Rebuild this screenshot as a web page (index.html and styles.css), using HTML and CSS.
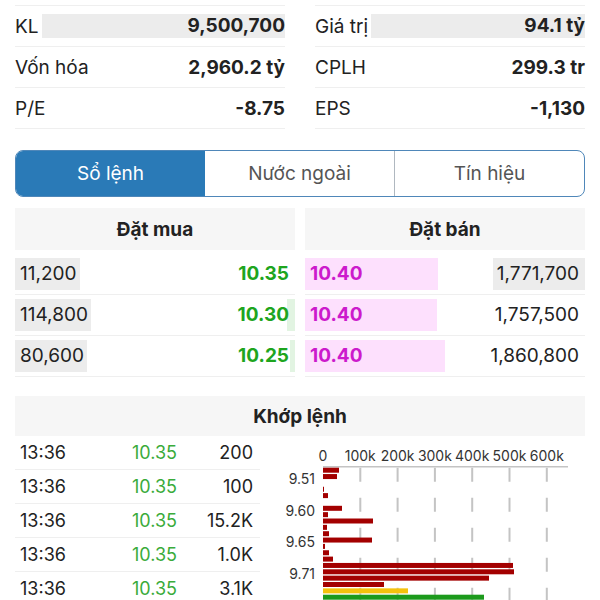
FILE: index.html
```html
<!DOCTYPE html>
<html lang="vi">
<head>
    <meta charset="UTF-8">
    <meta name="viewport" content="width=device-width, initial-scale=1.0">
    <title>Sổ lệnh</title>
    <link rel="stylesheet" href="styles.css">
</head>
<body>
    <div class="stats">
        <div class="stat-col">
            <div class="stat-row"><span class="stat-label">KL</span><span class="stat-value hl">9,500,700</span></div>
            <div class="stat-row"><span class="stat-label">Vốn hóa</span><span class="stat-value">2,960.2 tỷ</span></div>
            <div class="stat-row"><span class="stat-label">P/E</span><span class="stat-value">-8.75</span></div>
        </div>
        <div class="stat-col">
            <div class="stat-row"><span class="stat-label">Giá trị</span><span class="stat-value hl">94.1 tỷ</span></div>
            <div class="stat-row"><span class="stat-label">CPLH</span><span class="stat-value">299.3 tr</span></div>
            <div class="stat-row"><span class="stat-label">EPS</span><span class="stat-value">-1,130</span></div>
        </div>
    </div>

    <div class="tabs">
        <div class="tab active">Sổ lệnh</div>
        <div class="tab">Nước ngoài</div>
        <div class="tab">Tín hiệu</div>
    </div>

    <div class="book">
        <div class="book-side">
            <div class="book-head">Đặt mua</div>
            <div class="book-row">
                <span class="vol-chip">11,200</span>
                <span class="bid-price">10.35</span>
            </div>
            <div class="book-row">
                <span class="vol-chip">114,800</span>
                <span class="bid-depth" style="width: 8px"></span>
                <span class="bid-price">10.30</span>
            </div>
            <div class="book-row">
                <span class="vol-chip">80,600</span>
                <span class="bid-depth" style="width: 5px"></span>
                <span class="bid-price">10.25</span>
            </div>
        </div>
        <div class="book-side">
            <div class="book-head">Đặt bán</div>
            <div class="book-row">
                <span class="ask-price" style="width: 133px">10.40</span>
                <span class="ask-vol hl">1,771,700</span>
            </div>
            <div class="book-row">
                <span class="ask-price" style="width: 132px">10.40</span>
                <span class="ask-vol">1,757,500</span>
            </div>
            <div class="book-row">
                <span class="ask-price" style="width: 140px">10.40</span>
                <span class="ask-vol">1,860,800</span>
            </div>
        </div>
    </div>

    <div class="match">
        <div class="match-head">Khớp lệnh</div>
        <div class="match-body">
            <div class="trades">
                <div class="trade"><span class="t-time">13:36</span><span class="t-price">10.35</span><span class="t-vol">200</span></div>
                <div class="trade"><span class="t-time">13:36</span><span class="t-price">10.35</span><span class="t-vol">100</span></div>
                <div class="trade"><span class="t-time">13:36</span><span class="t-price">10.35</span><span class="t-vol">15.2K</span></div>
                <div class="trade"><span class="t-time">13:36</span><span class="t-price">10.35</span><span class="t-vol">1.0K</span></div>
                <div class="trade"><span class="t-time">13:36</span><span class="t-price">10.35</span><span class="t-vol">3.1K</span></div>
            </div>
            <svg class="chart" id="chart" width="325" height="170" viewBox="0 0 325 170"></svg>
        </div>
    </div>

    <script>
        // Volume by price, 100k = 37.3px
        var x0 = 63, step = 37.3, axisY = 30.7, pitch = 6.35;
        var bars = [16, 14, 0, 1, 5, 0, 19, 5, 50, 4, 6, 49, 2, 6, 10, 190, 191, 166, 61, 85, 161];
        var ticks = ['0', '100k', '200k', '300k', '400k', '500k', '600k'];
        var prices = ['9.51', '9.60', '9.65', '9.71', '9.75'];
        var svg = '';

        ticks.forEach(function (t, i) {
            var x = x0 + i * step;
            svg += '<text class="tick" x="' + x + '" y="21" text-anchor="middle">' + t + '</text>';
            if (i > 0) {
                svg += '<line class="grid" x1="' + x + '" y1="' + (axisY + 1) + '" x2="' + x + '" y2="170"/>';
            }
        });
        svg += '<line class="axis" x1="' + x0 + '" y1="' + axisY + '" x2="308" y2="' + axisY + '"/>';

        bars.forEach(function (w, i) {
            if (!w) return;
            var color = i === 19 ? '#f4c20d' : (i === 20 ? '#1c9a1c' : '#a30000');
            svg += '<rect x="' + x0 + '" y="' + (axisY + 1 + i * pitch) + '" width="' + w + '" height="5" fill="' + color + '"/>';
        });

        prices.forEach(function (p, i) {
            svg += '<text class="price" x="55" y="' + (44 + i * 31.7) + '" text-anchor="end">' + p + '</text>';
        });

        document.getElementById('chart').innerHTML = svg;
    </script>
</body>
</html>
```

FILE: styles.css
```css
body {
    margin: 0;
    background-color: #fff;
    color: #222;
    font-family: Inter, "Noto Sans", sans-serif;
}

.stats {
    display: grid;
    grid-template-columns: 1fr 1fr;
    column-gap: 30px;
    padding: 5px 15px 0;
}

.stat-col {
    border-top: 1px solid #efefef;
}

.stat-row {
    display: flex;
    align-items: center;
    height: 40px;
    border-bottom: 1px solid #efefef;
    font-size: 19px;
}

.stat-value {
    margin-left: auto;
    font-weight: 700;
}

.stat-value.hl {
    flex: 1;
    margin-left: 3px;
    text-align: right;
    line-height: 24px;
    background-color: #ececec;
}

.tabs {
    display: flex;
    height: 47px;
    margin: 21px 15px 0;
    border: 1.5px solid #4f87b9;
    border-radius: 8px;
    overflow: hidden;
    box-sizing: border-box;
}

.tab {
    flex: 1;
    display: flex;
    align-items: center;
    justify-content: center;
    font-size: 19px;
    color: #555;
}

.tab + .tab {
    border-left: 1px solid #b0b8c0;
}

.tab.active {
    background-color: #2a7ab7;
    color: #fff;
}

.tab.active + .tab {
    border-left: none;
}

.book {
    display: grid;
    grid-template-columns: 1fr 1fr;
    column-gap: 10px;
    margin: 11px 15px 0;
}

.book-head {
    display: flex;
    align-items: center;
    justify-content: center;
    height: 42px;
    margin-bottom: 4px;
    background-color: #f6f6f6;
    font-size: 19px;
    font-weight: 700;
}

.book-row {
    position: relative;
    display: flex;
    align-items: center;
    height: 32px;
    padding: 4px 0;
    border-bottom: 1px solid #efefef;
    font-size: 19px;
    line-height: 32px;
}

.vol-chip {
    padding: 0 3px 0 5px;
    background-color: #ececec;
}

.bid-depth {
    position: absolute;
    right: 0;
    top: 4px;
    height: 32px;
    background-color: #e2f4e2;
}

.bid-price {
    position: relative;
    margin-left: auto;
    padding-right: 6px;
    color: #1ea51e;
    font-weight: 700;
}

.ask-price {
    padding-left: 5px;
    box-sizing: border-box;
    background-color: #fde0fd;
    color: #cc1acc;
    font-weight: 700;
}

.ask-vol {
    margin-left: auto;
    padding: 0 6px 0 4px;
}

.ask-vol.hl {
    background-color: #ececec;
}

.match {
    margin: 19px 15px 0;
}

.match-head {
    display: flex;
    align-items: center;
    justify-content: center;
    height: 40px;
    background-color: #f6f6f6;
    font-size: 19px;
    font-weight: 700;
}

.match-body {
    display: flex;
}

.trades {
    width: 245px;
    flex-shrink: 0;
}

.trade {
    display: flex;
    align-items: center;
    height: 33px;
    border-bottom: 1px solid #efefef;
    font-size: 18px;
}

.t-time {
    width: 117px;
    padding-left: 5px;
    box-sizing: border-box;
}

.t-price {
    color: #3aab3a;
}

.t-vol {
    margin-left: auto;
    padding-right: 7px;
}

.chart {
    display: block;
    flex-shrink: 0;
}

.chart text {
    font-family: Inter, "Noto Sans", sans-serif;
    font-size: 14px;
    fill: #333;
    dominant-baseline: middle;
}

.chart .axis {
    stroke: #c4c4c4;
    stroke-width: 1.5;
}

.chart .grid {
    stroke: #c4c4c4;
    stroke-width: 2;
    stroke-dasharray: 14 16;
}
```
